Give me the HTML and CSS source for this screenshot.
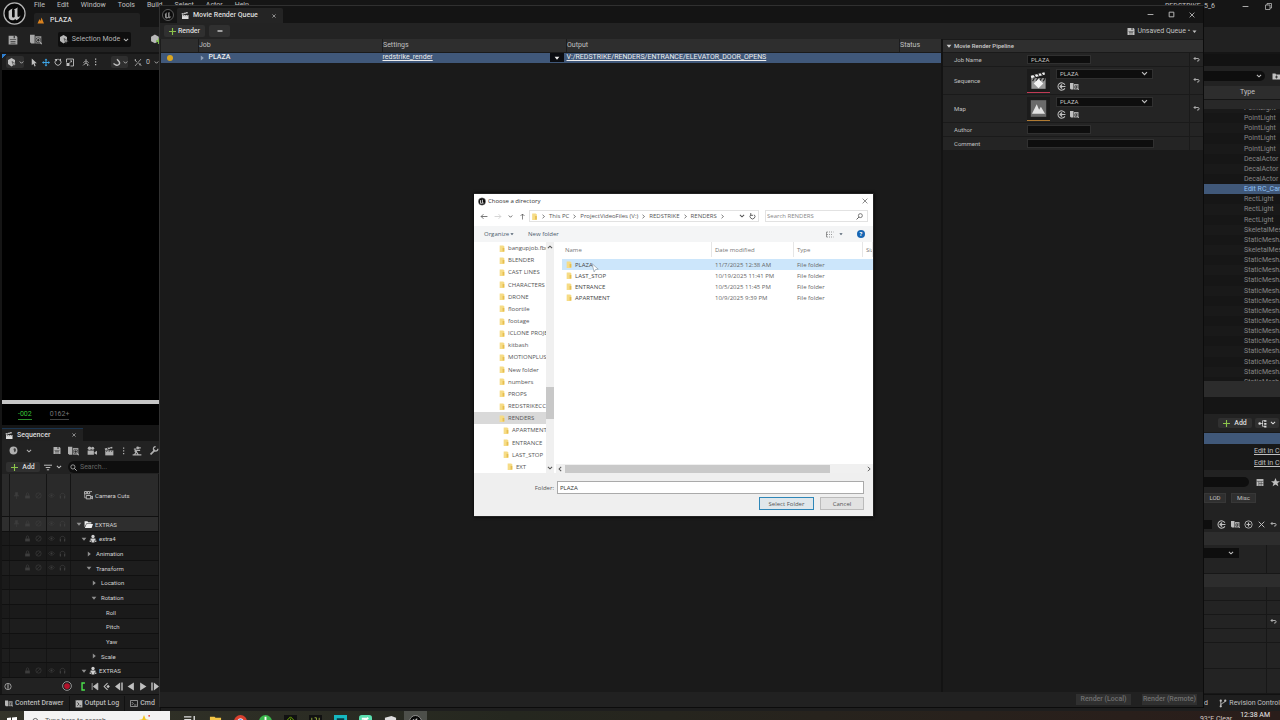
FILE: index.html
```
<!DOCTYPE html>
<html lang="en">
<head>
<meta charset="utf-8">
<title>Movie Render Queue</title>
<link rel="stylesheet" href="styles.css">
</head>
<body>
<svg class="defs" aria-hidden="true">
  <symbol id="ue" viewBox="0 0 24 24"><circle cx="12" cy="12" r="11" fill="#080808" stroke="#b5b5b5" stroke-width="1.3"/><path d="M5 12c.6-2.700 2.600-4.500 5.300-5.200-.8.700-.9 1.200-.9 2.200v5.800c0 .9.600 1.500 1.400 1.500s1.400-.6 1.400-1.200V8.600c0-.7-.3-1-.9-1.200 1.600-.3 2.900-.9 4.200-2-.5 1-.4 1.500-.4 2.400v6.800c0 .7.400 1 .9 1 1 0 1.700-.7 2.500-1.700-.9 3-2.800 4.300-4.500 5.100l-1.300-1.300c-.6.700-1.500 1.400-3 1.400-2.300 0-3.800-1.200-3.800-3.600v-4.800c0-.8-.2-.9-.9 1.300z" fill="#c4c4c4"/></symbol>
  <symbol id="save" viewBox="0 0 16 16"><path d="M1 1h12l2 2v12H1z" fill="currentColor"/><path d="M9 1h2v4H9zM4 10h8v1H4zM4 12.500h8v1H4z" fill="#333"/><path d="M3 7h10v1H3z" fill="#333"/></symbol>
  <symbol id="browse" viewBox="0 0 18 16"><path d="M0 1h7v13H2L0 12z" fill="currentColor"/><path d="M8 3h9v11H8z" fill="currentColor" opacity=".85"/><circle cx="12.500" cy="9" r="3" fill="#2a2a2a" stroke="#2a2a2a" stroke-width="2"/><circle cx="12.500" cy="9" r="2.600" fill="none" stroke="currentColor" stroke-width="1.400"/><path d="m14.500 11 3 4" stroke="currentColor" stroke-width="1.800"/></symbol>
  <symbol id="cube" viewBox="0 0 18 18"><path d="M7 0l7 4v8l-7 5-7-5V4z" fill="currentColor"/><path d="m8 7 9 5.500-3.500.8L12 17.500z" fill="currentColor" stroke="#161616"/></symbol>
  <symbol id="cubeadd" viewBox="0 0 20 20"><path d="M8 1l7 4v8l-7 4-7-4V5z" fill="#b9b9b9"/><path d="M15 8v10M10 13h10" stroke="#7ebd4e" stroke-width="3"/></symbol>
  <symbol id="chev" viewBox="0 0 10 10"><path d="m1.500 3 3.500 3.500L8.500 3" fill="none" stroke="currentColor" stroke-width="1.700"/></symbol>
  <symbol id="right" viewBox="0 0 10 10"><path d="m3 1.500 4 3.500-4 3.500" fill="none" stroke="currentColor" stroke-width="1.500"/></symbol>
  <symbol id="down" viewBox="0 0 10 10"><path d="M1 3h8L5 8z" fill="currentColor"/></symbol>
  <symbol id="tri" viewBox="0 0 10 10"><path d="M3 1v8l5-4z" fill="currentColor"/></symbol>
  <symbol id="plus" viewBox="0 0 12 12"><path d="M6 0v12M0 6h12" stroke="#8bc34a" stroke-width="1.900"/></symbol>
  <symbol id="x" viewBox="0 0 10 10"><path d="m1 1 8 8M9 1 1 9" stroke="currentColor" stroke-width="1.400"/></symbol>
  <symbol id="arrow" viewBox="0 0 12 16"><path d="M2 1v12l3-3 2 5 2-1-2-4.500h4z" fill="currentColor"/></symbol>
  <symbol id="move" viewBox="0 0 16 16"><path d="M8 0l3 3.500H9V7h3.500V5L16 8l-3.500 3V9H9v3.500h2L8 16l-3-3.500h2V9H3.500v2L0 8l3.500-3v2H7V3.500H5z" fill="#3ea6e8"/></symbol>
  <symbol id="rot" viewBox="0 0 16 16"><path d="M12 3a6 6 0 1 1-8 0" fill="none" stroke="currentColor" stroke-width="1.800"/><path d="M4 2.500C6 1.500 9 1.300 11 2.200" fill="none" stroke="currentColor" stroke-width="1.500"/><path d="M1 1h5v5zM14 0v5l-4-2z" fill="currentColor"/></symbol>
  <symbol id="scale" viewBox="0 0 16 16"><path d="M1 8V1h14v14H9" fill="none" stroke="currentColor" stroke-width="1.800"/><path d="M1 9h6v6H1zM8 4h4v4z" fill="currentColor"/><path d="m7 9 4-4" stroke="currentColor" stroke-width="1.500"/></symbol>
  <symbol id="axis" viewBox="0 0 16 16"><path d="M8 1v7l-6 6M8 8l6 6M3 9c1-5 9-5 10 0M5 12c2-3 4-3 6 0v3" fill="none" stroke="currentColor" stroke-width="1.400"/></symbol>
  <symbol id="dots" viewBox="0 0 6 16"><path d="M2 1h2.500v2.500H2zM2 6.500h2.500V9H2zM2 12h2.500v2.500H2z" fill="currentColor"/></symbol>
  <symbol id="snap" viewBox="0 0 16 16"><path d="m1 10 5 3c5 2 9-3 6-7L8 1.500" fill="none" stroke="currentColor" stroke-width="2.800"/></symbol>
  <symbol id="grid" viewBox="0 0 16 16"><path d="M2 15 14 1M1 3l5 4M9 10l6 4M3 1v4M12 9v5" fill="none" stroke="currentColor" stroke-width="1.400"/></symbol>
  <symbol id="mount" viewBox="0 0 16 16"><path d="M1 14l4-9 2 4 2-7 5 12z" fill="#d8811f"/></symbol>
  <symbol id="clap" viewBox="0 0 16 16"><path d="M2 7h13v8H2z" fill="currentColor"/><path d="m1 4 12-3 .7 2.500L2 6.700z" fill="currentColor"/><path d="m5 3 1.500 2.500M9 2l1.500 2.500M5 7 4 9.500M9 7 8 9.500M13 7l-1 2.500" stroke="#222" stroke-width="1.100"/></symbol>
  <symbol id="world" viewBox="0 0 16 16"><circle cx="8" cy="8" r="7" fill="currentColor"/><path d="M9 4c3-1 4 2 3 5s-3 2-3 0-2-3 0-5z" fill="#444"/></symbol>
  <symbol id="cam" viewBox="0 0 16 16"><circle cx="4" cy="3.500" r="2.800" fill="currentColor"/><circle cx="9" cy="3.500" r="2.500" fill="currentColor"/><path d="M1 7h10v7H1zM12 10l4-2.500V14l-4-2z" fill="currentColor"/></symbol>
  <symbol id="keys" viewBox="0 0 16 16"><path d="M1 14h14M4 14l3-5 3 5M3 5h4M9 3h5M8 7h5" fill="none" stroke="currentColor" stroke-width="2"/><circle cx="9" cy="3" r="2.200" fill="currentColor"/><circle cx="6" cy="8" r="2.200" fill="currentColor"/></symbol>
  <symbol id="wrench" viewBox="0 0 16 16"><path d="m1 15 8-8" stroke="currentColor" stroke-width="3"/><path d="M14 5a4 4 0 1 1-4-4" fill="none" stroke="currentColor" stroke-width="2.200"/></symbol>
  <symbol id="filter" viewBox="0 0 14 12"><path d="M0 2h14M3 6h8M5 10h4" stroke="currentColor" stroke-width="1.700"/></symbol>
  <symbol id="mag" viewBox="0 0 12 12"><circle cx="5" cy="5" r="3.600" fill="none" stroke="currentColor" stroke-width="1.300"/><path d="m7.500 7.500 4 4" stroke="currentColor" stroke-width="1.600"/></symbol>
  <symbol id="magl" viewBox="0 0 12 12"><circle cx="7.500" cy="4.500" r="3.400" fill="none" stroke="currentColor" stroke-width="1.300"/><path d="m5 7-4 4" stroke="currentColor" stroke-width="1.600"/></symbol>
  <symbol id="pin" viewBox="0 0 12 12"><path d="M4 1h4v4l2 2H2l2-2zM6 7v5" fill="currentColor" stroke="currentColor"/></symbol>
  <symbol id="lock" viewBox="0 0 12 12"><path d="M2 6h8v5H2z" fill="currentColor"/><path d="M4 6V3c0-2 4-2 4 0v3" fill="none" stroke="currentColor" stroke-width="1.300"/></symbol>
  <symbol id="mute" viewBox="0 0 12 12"><circle cx="6" cy="6" r="4.500" fill="none" stroke="currentColor" stroke-width="1.200"/><path d="m3 9 6-6" stroke="currentColor"/></symbol>
  <symbol id="eye" viewBox="0 0 12 12"><path d="M1 6c2.500-4 7.500-4 10 0-2.500 4-7.500 4-10 0z" fill="none" stroke="currentColor"/><circle cx="6" cy="6" r="1.800" fill="currentColor"/></symbol>
  <symbol id="head" viewBox="0 0 12 12"><path d="M2 10V6c0-5 8-5 8 0v4" fill="none" stroke="currentColor" stroke-width="1.200"/><path d="M1.500 7h2v4h-2zM8.500 7h2v4h-2z" fill="currentColor"/></symbol>
  <symbol id="cuts" viewBox="0 0 16 16"><path d="M1 1h4v4H1zM6 1h4v4H6zM11 1h3M4 8h8v6H4zM12 11l3-2v5l-3-2" fill="none" stroke="currentColor" stroke-width="1.500"/><path d="M1 5v7h3" fill="none" stroke="currentColor"/></symbol>
  <symbol id="folder" viewBox="0 0 16 14"><path d="M1 1h5l1.500 2H13v2H4l-3 7z" fill="#eee"/><path d="M4.500 6H16l-2.500 7H1.500z" fill="#eee"/></symbol>
  <symbol id="person" viewBox="0 0 16 16"><circle cx="8" cy="4" r="3.300" fill="currentColor"/><path d="M3 8h10v5h-2v3H5v-3H3z" fill="currentColor"/><path d="M1 12h4v3H1zM11 12h4v3h-4z" fill="currentColor" stroke="#222" stroke-width=".7"/></symbol>
  <symbol id="info" viewBox="0 0 14 14"><circle cx="7" cy="7" r="5.500" fill="none" stroke="currentColor" stroke-width="1.300"/><path d="M7 3v8" stroke="currentColor" stroke-width="1.600"/></symbol>
  <symbol id="rec" viewBox="0 0 16 16"><circle cx="8" cy="8" r="7" fill="#1b1b1b" stroke="#bbb" stroke-width="1.200"/><circle cx="8" cy="8" r="4.600" fill="#b3122a"/></symbol>
  <symbol id="brk" viewBox="0 0 8 14"><path d="M7 1.500H2.500v11H7" fill="none" stroke="#4be04b" stroke-width="2.200"/></symbol>
  <symbol id="first" viewBox="0 0 14 14"><path d="M2 1v12M12 1v12L4 7z" fill="currentColor" stroke="currentColor" stroke-width="1.300"/></symbol>
  <symbol id="pkey" viewBox="0 0 14 14"><path d="M8 1 2 7l6 6" fill="none" stroke="currentColor" stroke-width="1.800"/><path d="m9 4 3 3-3 3-3-3z" fill="currentColor"/></symbol>
  <symbol id="pframe" viewBox="0 0 14 14"><path d="M9 0v14L0 7zM11 0h2.500v14H11z" fill="currentColor"/></symbol>
  <symbol id="play" viewBox="0 0 14 14"><path d="M2 0v14l11-7z" fill="currentColor"/></symbol>
  <symbol id="log" viewBox="0 0 14 16"><path d="M1 2h12v13H1z" fill="currentColor"/><path d="M3 0v3M7 0v3M11 0v3" stroke="#222"/><path d="m4 6 3 3-3 3M8 12h3" fill="none" stroke="#222" stroke-width="1.400"/></symbol>
  <symbol id="term" viewBox="0 0 16 14"><path d="M1 1h14v12H1z" fill="none" stroke="currentColor" stroke-width="1.400"/><path d="m3.500 4 3 3-3 3M8 10h5" fill="none" stroke="currentColor" stroke-width="1.400"/></symbol>
  <symbol id="branch" viewBox="0 0 14 16"><circle cx="3" cy="3" r="2" fill="currentColor"/><circle cx="11" cy="3" r="2" fill="currentColor"/><circle cx="3" cy="13" r="2" fill="currentColor"/><path d="M3 3v10M11 3c0 5-8 3-8 8" fill="none" stroke="currentColor" stroke-width="1.500"/></symbol>
  <symbol id="revert" viewBox="0 0 14 12"><path d="M5 1 2 4l3 3M2 4h8c3 0 3 5 0 5H8" fill="none" stroke="currentColor" stroke-width="1.700"/></symbol>
  <symbol id="use" viewBox="0 0 16 16"><path d="M14 5a6.500 6.500 0 1 0 0 6" fill="none" stroke="currentColor" stroke-width="1.800"/><path d="M15 8H6M9 4.500 5.500 8 9 11.500" fill="none" stroke="currentColor" stroke-width="2.200"/></symbol>
  <symbol id="target" viewBox="0 0 16 16"><circle cx="8" cy="8" r="6.500" fill="none" stroke="currentColor" stroke-width="1.500"/><path d="M8 4.500v7M4.500 8h7" stroke="currentColor" stroke-width="2"/></symbol>
  <symbol id="faddr" viewBox="0 0 16 14"><path d="M1 1h6l1 2h8v10H1z" fill="currentColor"/><path d="M9 5v6M6 8h6" stroke="#222" stroke-width="1.500"/></symbol>
  <symbol id="nodes" viewBox="0 0 16 14"><circle cx="3" cy="7" r="2.300" fill="currentColor"/><path d="M5 7h4M8 2h5M8 12h5M8 2v10" stroke="currentColor" stroke-width="1.300"/><path d="M11 1h4v3h-4zM11 6h4v3h-4zM11 11h4v3h-4z" fill="currentColor"/></symbol>
  <symbol id="cells" viewBox="0 0 14 14"><path d="M1 1h12v12H1z" fill="currentColor"/><path d="M1 5h12M5 5v8M9 5v8M5 9h8" stroke="#333"/></symbol>
  <symbol id="star" viewBox="0 0 14 14"><path d="m7 0 2 5h5l-4 3 1.500 5L7 10l-4.500 3L4 8 0 5h5z" fill="currentColor"/></symbol>
  <symbol id="restore" viewBox="0 0 14 14"><path d="M1 4h9v9H1zM4 4V1h9v9h-3" fill="none" stroke="currentColor" stroke-width="1.500"/></symbol>
  <symbol id="max" viewBox="0 0 12 12"><path d="M2 2h8v8H2z" fill="none" stroke="currentColor" stroke-width="1.600"/></symbol>
  <symbol id="min" viewBox="0 0 12 12"><path d="M1 6h10" stroke="currentColor" stroke-width="1.500"/></symbol>
  <symbol id="bar" viewBox="0 0 12 12"><path d="M1 6h10" stroke="currentColor" stroke-width="2.600"/></symbol>
  <symbol id="seq" viewBox="0 0 32 32"><path d="M4 12h24v18H4z" fill="#999"/><path d="m3 8 23-6 1 4L4 12z" fill="#eee"/><path d="m8 6 3 4M14 4l3 4M20 3l3 4M9 12l-3 5M15 12l-3 5M21 12l-3 5M27 12l-3 5" stroke="#252525" stroke-width="2"/><path d="m16 13 8 8-8 8-8-8z" fill="#f2f2f2"/></symbol>
  <symbol id="map" viewBox="0 0 32 32"><path d="M3 2h26v28H3z" fill="#6a6a6a"/><path d="m5 25 8-16 4 9 3-5 7 12z" fill="#e2e2e2"/></symbol>
  <symbol id="yf" viewBox="0 0 10 12"><path d="M1 1h6l2 1v10H1z" fill="#f6dc86"/><path d="M6 5h3v6H6z" fill="#e6bf50"/></symbol>
  <symbol id="back" viewBox="0 0 14 10"><path d="M13 5H2M6 1 2 5l4 4" fill="none" stroke="currentColor" stroke-width="1.400"/></symbol>
  <symbol id="refresh" viewBox="0 0 12 12"><path d="M9 3a4.200 4.200 0 1 1-6 0M3 0v4h4" fill="none" stroke="currentColor" stroke-width="1.500"/></symbol>
  <symbol id="view" viewBox="0 0 16 12"><path d="M1 1h3M1 6h3M1 11h3M6 1h2M10 1h2M14 1h1M6 6h2M10 6h2M6 11h2M10 11h2M14 11h1M1 1v10" fill="none" stroke="#666" stroke-width="1.300"/></symbol>
</svg>

<div class="desktop">
  <main class="editor">
    <header class="apphead">
      <svg class="uelogo"><use href="#ue"/></svg>
      <div class="headcol">
        <nav class="menu"><a href="#">File</a><a href="#">Edit</a><a href="#">Window</a><a href="#">Tools</a><a href="#">Build</a><a href="#">Select</a><a href="#">Actor</a><a href="#">Help</a></nav>
        <div class="leveltab"><svg class="i8"><use href="#mount"/></svg>PLAZA</div>
      </div>
      <div class="wintitle"><span>REDSTRIKE_5_6</span><svg class="i7 m1"><use href="#min"/></svg><svg class="i7"><use href="#restore"/></svg></div>
    </header>
    <div class="toolbar">
      <svg class="i10"><use href="#save"/></svg><svg class="i12"><use href="#browse"/></svg>
      <button class="mode"><svg class="i9"><use href="#cube"/></svg>Selection Mode<svg class="i6"><use href="#chev"/></svg></button>
      <svg class="i12"><use href="#cubeadd"/></svg>
    </div>
    <div class="work">
      <section class="left">
        <div class="viewbar">
          <span class="pill"><svg class="i9"><use href="#cube"/></svg><svg class="i5"><use href="#chev"/></svg></span>
          <svg class="i8"><use href="#arrow"/></svg><svg class="i8"><use href="#move"/></svg><svg class="i8"><use href="#rot"/></svg><svg class="i8"><use href="#scale"/></svg>
          <i class="vline"></i><svg class="i8"><use href="#axis"/></svg><svg class="dot"><use href="#dots"/></svg>
          <span class="pill snap"><svg class="i8"><use href="#snap"/></svg><svg class="i5"><use href="#chev"/></svg></span>
          <svg class="i8"><use href="#grid"/></svg><span class="zero">0</span><svg class="i5"><use href="#chev"/></svg>
        </div>
        <div class="viewport"></div>
        <div class="frames"><span class="cur">-002</span><span class="len">0162+</span></div>
        <div class="seqtabs"><div class="seqtab"><svg class="i8"><use href="#clap"/></svg>Sequencer<svg class="i4"><use href="#x"/></svg></div></div>
        <div class="seqbar">
          <svg class="i9"><use href="#world"/></svg><svg class="i6"><use href="#chev"/></svg><i class="gap"></i>
          <svg class="i8"><use href="#save"/></svg><svg class="i11"><use href="#browse"/></svg><svg class="i10"><use href="#cam"/></svg><svg class="i10"><use href="#clap"/></svg><svg class="dot"><use href="#dots"/></svg><svg class="i10"><use href="#keys"/></svg><svg class="i9"><use href="#wrench"/></svg>
        </div>
        <div class="addbar"><button class="add"><svg class="i7"><use href="#plus"/></svg>Add</button><svg class="i8"><use href="#filter"/></svg><svg class="i6"><use href="#chev"/></svg><label class="seqsearch"><svg class="i7"><use href="#mag"/></svg><input type="text" placeholder="Search..." aria-label="Search tracks"></label></div>
        <ul class="tree">
          <li class="track cuts"><span></span><span class="flags"><svg><use href="#pin"/></svg><svg><use href="#lock"/></svg><svg><use href="#mute"/></svg></span><span class="flags"><svg><use href="#eye"/></svg><svg><use href="#head"/></svg></span><span class="name d0"><svg class="i9"><use href="#cuts"/></svg>Camera Cuts</span></li>
          <li class="track lit"><span></span><span class="flags"><svg><use href="#pin"/></svg><svg><use href="#lock"/></svg><svg><use href="#mute"/></svg></span><span class="flags"><svg><use href="#eye"/></svg><svg><use href="#head"/></svg></span><span class="name d1"><svg class="i6"><use href="#down"/></svg><svg class="i9"><use href="#folder"/></svg>EXTRAS</span></li>
          <li class="track"><span></span><span class="flags"><svg><use href="#lock"/></svg><svg><use href="#mute"/></svg></span><span class="flags"><svg><use href="#eye"/></svg><svg><use href="#head"/></svg></span><span class="name d2"><svg class="i6"><use href="#down"/></svg><svg class="i8"><use href="#person"/></svg>extra4</span></li>
          <li class="track"><span></span><span class="flags"><svg><use href="#lock"/></svg><svg><use href="#mute"/></svg></span><span class="flags"><svg><use href="#eye"/></svg><svg><use href="#head"/></svg></span><span class="name d3"><svg class="i6"><use href="#tri"/></svg>Animation</span></li>
          <li class="track alt"><span></span><span class="flags"><svg><use href="#lock"/></svg><svg><use href="#mute"/></svg></span><span class="flags"><svg><use href="#eye"/></svg><svg><use href="#head"/></svg></span><span class="name d3"><svg class="i6"><use href="#down"/></svg>Transform</span></li>
          <li class="track"><span></span><span class="flags"></span><span class="flags"></span><span class="name d4"><svg class="i6"><use href="#tri"/></svg>Location</span></li>
          <li class="track alt"><span></span><span class="flags"></span><span class="flags"></span><span class="name d4"><svg class="i6"><use href="#down"/></svg>Rotation</span></li>
          <li class="track"><span></span><span class="flags"></span><span class="flags"></span><span class="name d5">Roll</span></li>
          <li class="track alt"><span></span><span class="flags"></span><span class="flags"></span><span class="name d5">Pitch</span></li>
          <li class="track"><span></span><span class="flags"></span><span class="flags"></span><span class="name d5">Yaw</span></li>
          <li class="track alt"><span></span><span class="flags"></span><span class="flags"></span><span class="name d4"><svg class="i6"><use href="#tri"/></svg>Scale</span></li>
          <li class="track"><span></span><span class="flags"><svg><use href="#lock"/></svg><svg><use href="#mute"/></svg></span><span class="flags"><svg><use href="#eye"/></svg><svg><use href="#head"/></svg></span><span class="name d2"><svg class="i6"><use href="#down"/></svg><svg class="i8"><use href="#person"/></svg>EXTRAS</span></li>
        </ul>
        <div class="playbar"><svg class="i8"><use href="#info"/></svg><svg class="i10 rec"><use href="#rec"/></svg><svg class="i8"><use href="#brk"/></svg><svg class="i8"><use href="#first"/></svg><svg class="i8"><use href="#pkey"/></svg><svg class="i8"><use href="#pframe"/></svg><svg class="i8 flip"><use href="#play"/></svg><svg class="i8"><use href="#play"/></svg><svg class="i8 flip"><use href="#pframe"/></svg></div>
      </section>

      <aside class="right">
        <div class="outsearch"><span class="field"><svg class="i6"><use href="#chev"/></svg></span><svg class="i8"><use href="#faddr"/></svg></div>
        <div class="typehead">Type</div>
        <div class="band"></div>
        <div class="actors"><ul>
          <li>PointLight</li><li>PointLight</li><li>PointLight</li><li>PointLight</li><li>PointLight</li><li>DecalActor</li><li>DecalActor</li><li>DecalActor</li><li class="sel">Edit RC_Camera</li><li>RectLight</li><li>RectLight</li><li>RectLight</li><li>SkeletalMeshActor</li><li>StaticMeshActor</li><li>SkeletalMeshActor</li><li>StaticMeshActor</li><li>StaticMeshActor</li><li>StaticMeshActor</li><li>StaticMeshActor</li><li>StaticMeshActor</li><li>StaticMeshActor</li><li>StaticMeshActor</li><li>StaticMeshActor</li><li>StaticMeshActor</li><li>StaticMeshActor</li><li>StaticMeshActor</li><li>StaticMeshActor</li><li>StaticMeshActor</li>
        </ul></div>
        <div class="actfoot"></div>
        <div class="dettabs"></div>
        <div class="detadd"><button class="add"><svg class="i7"><use href="#plus"/></svg>Add</button><button class="add bp"><svg class="i9"><use href="#nodes"/></svg><svg class="i6"><use href="#chev"/></svg></button></div>
        <div class="comps"><div class="csel"></div><a href="#">Edit in C++</a><a href="#">Edit in C++</a></div>
        <div class="detsearch"><span class="field"></span><svg class="i8"><use href="#cells"/></svg><svg class="i9"><use href="#star"/></svg></div>
        <div class="chips"><button>LOD</button><button>Misc</button></div>
        <div class="deticons"><span class="stub"></span><svg class="i9"><use href="#use"/></svg><svg class="i9"><use href="#browse"/></svg><svg class="i9"><use href="#target"/></svg><svg class="i7"><use href="#x"/></svg><svg class="i7"><use href="#revert"/></svg></div>
        <div class="catband"></div>
        <div class="prop big"><span class="combo"><svg class="i6"><use href="#chev"/></svg></span><i></i></div>
        <div class="catband"></div>
        <div class="prop"><span></span><i></i></div>
        <div class="prop"><span></span><i></i></div>
        <div class="prop"><span></span><i><svg class="i7"><use href="#revert"/></svg></i></div>
        <div class="prop"><span></span><i></i></div>
        <div class="prop tall"><span></span><i></i></div>
        <div class="prop fill"><span></span><i></i></div>
      </aside>
    </div>
    <footer class="status"><button><svg class="i8"><use href="#browse"/></svg>Content Drawer</button><button><svg class="i8"><use href="#log"/></svg>Output Log</button><button><svg class="i8"><use href="#term"/></svg>Cmd</button><span class="rev"><b>d</b><svg class="i8"><use href="#branch"/></svg><span>Revision Control</span></span></footer>
  </main>

  <footer class="taskbar">
    <svg class="winlogo" viewBox="0 0 10 10"><path d="M0 1l4-.5V4.700H0zM5 .4 10 0v4.700H5zM0 5.500h4V10H0zM5 5.500h5V10H5z" fill="#fff"/></svg>
    <div class="find"><svg class="i8"><use href="#mag"/></svg><span>Type here to search</span><svg class="spark" viewBox="0 0 14 14"><path d="m7 0 2 5 5 1-4 3 1 5-4-3-4 3 1-5-4-3 5-1z" fill="#f2c31f"/><circle cx="13" cy="1" r="1" fill="#d33"/></svg></div>
    <svg class="task" viewBox="0 0 14 14"><path d="M0 2h8M1 5h6v8H1zM11 1v13" fill="none" stroke="#ddd" stroke-width="1.500"/></svg>
    <svg class="task" viewBox="0 0 14 14"><path d="M1 2h5l1 1h6v10H1z" fill="#f3c545"/></svg>
    <svg class="task" viewBox="0 0 14 14"><circle cx="7" cy="7" r="7" fill="#d9402f"/><circle cx="7" cy="7" r="3" fill="#4285f4" stroke="#fff"/></svg>
    <svg class="task" viewBox="0 0 14 14"><circle cx="7" cy="7" r="7" fill="#39b54a"/><path d="M7 2v5h3" stroke="#fff" stroke-width="2" fill="none"/></svg>
    <svg class="task" viewBox="0 0 14 14"><path d="M0 0h14v14H0z" fill="#111"/><path d="m2 7 5-5 5 5M7 4v6" stroke="#76b900" fill="none"/></svg>
    <svg class="task" viewBox="0 0 14 14"><path d="M0 0h14v14H0z" fill="#111"/><path d="M3 8V3M6 3h2v5M11 3v5" stroke="#9bb13c" fill="none"/></svg>
    <svg class="task" viewBox="0 0 14 14"><path d="M0 0h14v14H0z" fill="#16b8c0"/><path d="M3 5h8" stroke="#073a44" stroke-width="3"/></svg>
    <svg class="task" viewBox="0 0 14 14"><rect width="14" height="14" rx="3" fill="#5be0b0"/><path d="M3 4h6M5 7l5-4" stroke="#fff" stroke-width="2"/></svg>
    <svg class="task" viewBox="0 0 14 14"><path d="M1 3 8 1l5 2v10H1z" fill="#ddd"/></svg>
    <span class="active"><svg class="task" viewBox="0 0 24 24"><use href="#ue"/></svg></span>
    <div class="tray"><span class="weather">93°F Clear</span><time>12:38 AM</time></div>
  </footer>

  <section class="queue" aria-label="Movie Render Queue">
    <header class="qtitle"><svg class="qlogo"><use href="#ue"/></svg><div class="qtab"><svg class="i8"><use href="#clap"/></svg>Movie Render Queue<svg class="i4"><use href="#x"/></svg></div><div class="qwin"><svg class="i7"><use href="#min"/></svg><svg class="i7"><use href="#max"/></svg><svg class="i6"><use href="#x"/></svg></div></header>
    <div class="qbar"><button><svg class="i7"><use href="#plus"/></svg>Render</button><button class="minus" aria-label="Remove"><svg class="i6"><use href="#bar"/></svg></button><div class="unsaved"><svg class="i8"><use href="#save"/></svg>Unsaved Queue •<svg class="i5"><use href="#down"/></svg></div></div>
    <div class="qbody">
      <div class="jobs">
        <table>
          <colgroup><col class="c0"><col class="c1"><col class="c2"><col class="c3"><col class="c4"></colgroup>
          <thead><tr><th></th><th>Job</th><th>Settings</th><th>Output</th><th>Status</th></tr></thead>
          <tbody><tr><td><i class="light"></i></td><td><div class="job"><svg class="i6"><use href="#tri"/></svg>PLAZA</div></td><td><div class="set"><a href="#">redstrike_render</a><button aria-label="Presets"><svg class="i6"><use href="#down"/></svg></button></div></td><td><a href="#">V:/REDSTRIKE/RENDERS/ENTRANCE/ELEVATOR_DOOR_OPENS</a></td><td></td></tr></tbody>
        </table>
      </div>
      <div class="details">
        <h2><svg class="i6"><use href="#down"/></svg>Movie Render Pipeline</h2>
        <div class="drow"><label for="jn">Job Name</label><input id="jn" class="short" value="PLAZA"><i><svg class="i7"><use href="#revert"/></svg></i></div>
        <div class="drow asset"><label for="sq">Sequence</label><div class="pick"><svg class="thumb red"><use href="#seq"/></svg><div><span class="sel"><select id="sq"><option>PLAZA</option></select><svg class="i7"><use href="#chev"/></svg></span><span class="acts"><svg class="i9"><use href="#use"/></svg><svg class="i9"><use href="#browse"/></svg></span></div></div><i><svg class="i7"><use href="#revert"/></svg></i></div>
        <div class="drow asset"><label for="mp">Map</label><div class="pick"><svg class="thumb org"><use href="#map"/></svg><div><span class="sel"><select id="mp"><option>PLAZA</option></select><svg class="i7"><use href="#chev"/></svg></span><span class="acts"><svg class="i9"><use href="#use"/></svg><svg class="i9"><use href="#browse"/></svg></span></div></div><i><svg class="i7"><use href="#revert"/></svg></i></div>
        <div class="drow"><label for="au">Author</label><input id="au" class="short"><i></i></div>
        <div class="drow"><label for="cm">Comment</label><input id="cm"><i></i></div>
      </div>
    </div>
    <footer class="qfoot"><button disabled>Render (Local)</button><button disabled>Render (Remote)</button></footer>
  </section>

  <section class="dialog" role="dialog" aria-label="Choose a directory">
    <header class="dtitle"><svg class="i8"><use href="#ue"/></svg>Choose a directory<svg class="i6"><use href="#x"/></svg></header>
    <div class="addr">
      <svg class="i8"><use href="#back"/></svg><svg class="i8 flip dim"><use href="#back"/></svg><svg class="i5"><use href="#chev"/></svg><svg class="i7 up"><use href="#back"/></svg>
      <div class="crumbs"><svg class="i7"><use href="#yf"/></svg><svg class="i5"><use href="#right"/></svg><span>This PC</span><svg class="i5"><use href="#right"/></svg><span>ProjectVideoFiles (V:)</span><svg class="i5"><use href="#right"/></svg><span>REDSTRIKE</span><svg class="i5"><use href="#right"/></svg><span>RENDERS</span><svg class="i5"><use href="#right"/></svg><svg class="i6 end"><use href="#chev"/></svg><svg class="i7"><use href="#refresh"/></svg></div>
      <label class="dsearch"><input type="text" placeholder="Search RENDERS" aria-label="Search RENDERS"><svg class="i7"><use href="#magl"/></svg></label>
    </div>
    <div class="dbar"><button>Organize<svg class="i4"><use href="#down"/></svg></button><button>New folder</button><svg class="i8 vw"><use href="#view"/></svg><svg class="i4"><use href="#down"/></svg><span class="help">?</span></div>
    <div class="dmain">
      <ul class="nav">
        <li><svg><use href="#yf"/></svg>bangupjob.fbm</li><li><svg><use href="#yf"/></svg>BLENDER</li><li><svg><use href="#yf"/></svg>CAST LINES</li><li><svg><use href="#yf"/></svg>CHARACTERS</li><li><svg><use href="#yf"/></svg>DRONE</li><li><svg><use href="#yf"/></svg>floortile</li><li><svg><use href="#yf"/></svg>footage</li><li><svg><use href="#yf"/></svg>ICLONE PROJECTS</li><li><svg><use href="#yf"/></svg>kitbash</li><li><svg><use href="#yf"/></svg>MOTIONPLUS</li><li><svg><use href="#yf"/></svg>New folder</li><li><svg><use href="#yf"/></svg>numbers</li><li><svg><use href="#yf"/></svg>PROPS</li><li><svg><use href="#yf"/></svg>REDSTRIKECC</li><li class="on"><svg><use href="#yf"/></svg>RENDERS</li><li class="n1"><svg><use href="#yf"/></svg>APARTMENT</li><li class="n1"><svg><use href="#yf"/></svg>ENTRANCE</li><li class="n1"><svg><use href="#yf"/></svg>LAST_STOP</li><li class="n2"><svg><use href="#yf"/></svg>EXT</li>
      </ul>
      <div class="vs"><svg class="i6 flipv"><use href="#chev"/></svg><i></i><svg class="i6 foot"><use href="#chev"/></svg></div>
      <div class="files">
        <table>
          <colgroup><col class="f1"><col class="f2"><col class="f3"><col></colgroup>
          <thead><tr><th>Name</th><th>Date modified</th><th>Type</th><th>Size</th></tr></thead>
          <tbody>
            <tr class="on"><td><svg><use href="#yf"/></svg>PLAZA</td><td>11/7/2025 12:38 AM</td><td>File folder</td><td></td></tr>
            <tr><td><svg><use href="#yf"/></svg>LAST_STOP</td><td>10/19/2025 11:41 PM</td><td>File folder</td><td></td></tr>
            <tr><td><svg><use href="#yf"/></svg>ENTRANCE</td><td>10/5/2025 11:45 PM</td><td>File folder</td><td></td></tr>
            <tr><td><svg><use href="#yf"/></svg>APARTMENT</td><td>10/9/2025 9:39 PM</td><td>File folder</td><td></td></tr>
          </tbody>
        </table>
        <div class="hs"><svg class="i6 cw"><use href="#chev"/></svg><i></i><svg class="i6"><use href="#right"/></svg></div>
      </div>
    </div>
    <div class="dfoot">
      <div class="frow"><label for="fo">Folder:</label><input id="fo" value="PLAZA"></div>
      <div class="btns"><button class="ok">Select Folder</button><button>Cancel</button></div>
    </div>
    <svg class="cursor" viewBox="0 0 12 16"><path d="m1 1 9 8-4 .5L4 13z" fill="#fff" stroke="#8a9aa8"/></svg>
  </section>
</div>
</body>
</html>
```

FILE: styles.css
```
* { box-sizing: border-box; }
body { margin: 0; background: #111; font: 7px/9px Roboto, sans-serif; color: #c0c0c0; }
ul { margin: 0; padding: 0; list-style: none; }
a { color: inherit; text-decoration: none; }
button, input, select { font: inherit; color: inherit; border: 0; margin: 0; padding: 0; background: none; border-radius: 0; min-width: 0; appearance: none; }
button { display: flex; align-items: center; justify-content: center; white-space: nowrap; }
svg { flex: none; display: block; }
.defs { display: none; }
.i4 { width: 4px; height: 4px; } .i5 { width: 5px; height: 5px; } .i6 { width: 6px; height: 6px; }
.i7 { width: 7px; height: 7px; } .i8 { width: 8px; height: 9px; } .i9 { width: 9px; height: 9px; }
.i10 { width: 10px; height: 10px; } .i11 { width: 11px; height: 10px; } .i12 { width: 12px; height: 11px; }
.dot { width: 3px; height: 8px; }
.flip { transform: scaleX(-1); } .flipv { transform: scaleY(-1); } .up, .cw { transform: rotate(90deg); }

.desktop { position: relative; height: 100vh; overflow: hidden; display: flex; flex-direction: column; }
.editor { flex: 1; min-height: 0; display: flex; flex-direction: column; background: #151515; }
.apphead { display: flex; height: 27px; flex: none; }
.uelogo { width: 23px; height: 23px; margin: 2px 0 0 3px; }
.headcol { padding-left: 8px; display: flex; flex-direction: column; justify-content: space-between; }
.menu { display: flex; gap: 12px; padding-top: 1px; }
.leveltab { display: flex; align-items: center; gap: 5px; width: 106px; height: 14px; padding-left: 3px; background: #212121; border-radius: 2px 2px 0 0; font-weight: 500; color: #ddd; }
.wintitle { margin-left: auto; display: flex; align-items: center; height: 12px; padding-right: 8px; }
.wintitle .m1 { margin: 0 16px 0 27px; }
.toolbar { display: flex; align-items: center; height: 25px; flex: none; background: #212121; padding-left: 8px; color: #a8a8a8; }
.toolbar > .i12 { margin-left: 12px; }
.mode { gap: 3px; height: 15px; width: 73px; margin: 0 8px 0 16px; background: #0e0e0e; color: #b5b5b5; border-radius: 2px; }
.toolbar .mode + .i12 { margin-left: 11px; }
.work { flex: 1; min-height: 0; display: flex; justify-content: space-between; padding-top: 2px; }

.left { width: 157px; margin-left: 2px; display: flex; flex-direction: column; min-height: 0; }
.viewbar { display: flex; align-items: center; gap: 4px; height: 16px; flex: none; padding-left: 4px; background: linear-gradient(135deg, #2f7fd0 3px, #202020 3px); }
.pill { display: flex; align-items: center; gap: 2px; width: 20px; height: 12px; padding-left: 2px; background: #2f2f2f; border-radius: 2px; margin-right: 2px; }
.pill.snap { margin-left: 10px; }
.vline { width: 1px; height: 11px; background: #555; }
.viewport { flex: 1; background: #000; border-bottom: 4px solid #c6c6c6; }
.frames { height: 21px; flex: none; background: #000; display: flex; align-items: center; gap: 18px; padding-left: 16px; }
.cur { color: #38c438; border-bottom: 1px solid #2b8f2b; }
.len { color: #777; border-bottom: 1px solid #444; }
.seqtabs { height: 16px; flex: none; padding-top: 3px; }
.seqtab { width: 81px; height: 13px; display: flex; align-items: center; gap: 4px; padding: 0 7px 0 3px; background: #212121; border-top: 1px solid #1b3550; color: #ddd; font-weight: 500; }
.seqtab .i4 { margin-left: auto; }
.seqbar { height: 19px; flex: none; display: flex; align-items: center; justify-content: space-between; background: #222; padding-left: 7px; color: #b0b0b0; }
.seqbar .gap { width: 6px; }
.addbar { height: 14px; flex: none; display: flex; align-items: center; gap: 4px; background: #222; padding-left: 4px; }
.add { gap: 4px; height: 10px; width: 34px; background: #303030; color: #ddd; font-weight: 500; border-radius: 2px; }
.seqsearch { flex: 1; display: flex; align-items: center; gap: 3px; height: 12px; padding-left: 2px; margin-left: 2px; background: #0e0e0e; border-radius: 6px 0 0 6px; }
.seqsearch input { width: 100%; }
::placeholder { color: #666; opacity: 1; }
.tree { height: 204px; flex: none; display: flex; flex-direction: column; overflow: hidden; font-size: 6px; }
.track { flex: 1; min-height: 0; display: grid; grid-template-columns: 8px 37px 24px 1fr; border-bottom: 1px solid #101010; background: #1a1a1a; }
.track.cuts { flex: none; height: 43px; background: #2a2a2a; }
.track.lit { background: #2e2e2e; }
.track.alt { background: #1d1d1d; }
.track > span { border-right: 1px solid #141414; }
.flags { display: flex; align-items: center; justify-content: flex-end; gap: 4px; padding-right: 4px; color: #3d3d3d; }
.flags svg { width: 7px; height: 7px; }
.name { display: flex; align-items: center; gap: 2px; white-space: nowrap; color: #d2d2d2; padding-top: 1px; }
.name svg { color: #8f8f8f; } .name .i8, .name .i9 { color: #d0d0d0; }
.d0 { padding-left: 13px; } .d1 { padding-left: 5px; } .d2 { padding-left: 10px; } .d3, .d4 { gap: 4px; } .d3 { padding-left: 15px; } .d4 { padding-left: 20px; } .d5 { padding-left: 35px; }
.playbar { height: 16px; flex: none; display: flex; align-items: center; justify-content: space-between; background: #222; padding-left: 2px; }
.playbar .rec { margin: 0 3px 0 46px; }
.status { height: 17px; flex: none; display: flex; align-items: center; background: #1e1e1e; border-top: 1px solid #111; }
.status button { gap: 2px; height: 15px; padding: 0 5px; border-right: 1px solid #111; font-weight: 500; color: #b8b8b8; }
.rev { margin-left: auto; width: 76px; display: flex; align-items: center; gap: 2px; white-space: nowrap; overflow: hidden; }
.rev b { font-weight: 400; width: 15px; }

.right { width: 76px; display: flex; flex-direction: column; background: #222; overflow: hidden; }
.outsearch { margin-top: -2px; padding-top: 14px; height: 34px; flex: none; display: flex; align-items: center; gap: 7px; background: linear-gradient(#121212 14px, #222 14px); }
.field { height: 10px; width: 62px; display: flex; align-items: center; justify-content: flex-end; padding-right: 3px; background: #0e0e0e; border-radius: 0 5px 5px 0; }
.typehead { height: 14px; flex: none; padding: 2px 0 0 36px; background: #2d2d2d; border-bottom: 1px solid #151515; }
.band { height: 9px; flex: none; background: #282828; }
.actors { height: 272px; flex: none; overflow: hidden; background: #161616; color: #858585; }
.actors ul { height: 284px; margin-top: -6px; display: flex; flex-direction: column; }
.actors li { flex: 1; min-height: 0; padding-left: 40px; white-space: nowrap; line-height: 10px; }
.actors li:nth-child(odd) { background: #191919; }
.actors li.sel { background: #405879; color: #8fc0f5; display: block; }
.actfoot { height: 16px; flex: none; background: #2c2c2c; }
.dettabs { height: 17px; flex: none; background: #151515; }
.detadd { height: 18px; flex: none; display: flex; align-items: center; gap: 3px; padding-left: 14px; }
.detadd .bp { width: 24px; gap: 3px; }
.comps { height: 38px; flex: none; background: #181818; padding-top: 1px; display: flex; flex-direction: column; gap: 3px; }
.comps a { padding-left: 50px; white-space: nowrap; text-decoration: underline; }
.csel { height: 11px; background: #405879; }
.detsearch { height: 20px; flex: none; display: flex; align-items: center; gap: 7px; padding-top: 4px; }
.detsearch .field { width: 50px; }
.chips { height: 15px; flex: none; display: flex; align-items: center; gap: 5px; font-size: 6px; }
.chips button { height: 10px; width: 25px; background: #2f2f2f; border: 1px solid #373737; }
.chips button:first-child { width: 22px; }
.deticons { height: 27px; padding-top: 12px; flex: none; display: flex; align-items: center; justify-content: space-between; padding-right: 3px; }
.stub { width: 8px; height: 9px; background: #0e0e0e; }
.catband { height: 13px; flex: none; background: #2d2d2d; }
.prop { height: 14px; flex: none; display: flex; justify-content: space-between; border-bottom: 1px solid #171717; background: #232323; }
.prop i { width: 14px; border-left: 1px solid #171717; display: flex; align-items: center; padding-left: 3px; }
.prop.big { height: 29px; } .prop.tall { height: 26px; } .prop.fill { flex: 1; }
.combo { width: 35px; height: 10px; margin-top: 3px; background: #0e0e0e; display: flex; align-items: center; justify-content: flex-end; padding-right: 5px; }

.taskbar { height: 9px; flex: none; overflow: hidden; display: flex; align-items: flex-start; gap: 12px; padding-left: 7px; background: linear-gradient(90deg, #34342a, #25271f 40%, #2a1d1a); }
.winlogo { width: 10px; height: 12px; margin-top: 5px; }
.find { width: 146px; height: 20px; margin: 0 2px 0 -5px; background: #f3f3f3; color: #555; display: flex; align-items: center; gap: 5px; padding-left: 8px; white-space: nowrap; }
.spark { width: 12px; height: 12px; margin-left: 27px; }
.task { width: 13px; height: 13px; margin: 4px 0 0; }
.active { background: #4d4f4a; width: 23px; height: 20px; padding-left: 5px; margin-left: -5px; }
.tray { margin-left: auto; display: flex; gap: 8px; padding-right: 10px; color: #eee; white-space: nowrap; }
.weather { padding-top: 4px; color: #d3c5c0; }

.queue { position: absolute; left: 159px; right: 76px; top: 5px; bottom: 12px; display: flex; flex-direction: column; background: #1a1a1a; border: 1px solid #2e2e2e; border-color: #303030 #0c0c0c #0c0c0c #303030; }
.qtitle { height: 17px; flex: none; display: flex; align-items: center; background: #141414; padding-left: 2px; }
.qlogo { width: 12px; height: 12px; opacity: .7; }
.qtab { align-self: flex-end; height: 15px; width: 106px; margin-left: 3px; padding: 0 7px 0 4px; display: flex; align-items: center; gap: 4px; background: #242424; color: #ddd; font-weight: 500; white-space: nowrap; border-radius: 2px 2px 0 0; }
.qtab .i4 { margin-left: auto; }
.qwin { margin-left: auto; display: flex; gap: 14px; padding-right: 8px; align-items: center; }
.qbar { height: 16px; flex: none; display: flex; align-items: center; gap: 4px; padding: 0 6px 0 4px; background: #232323; }
.qbar button { height: 12px; width: 41px; gap: 2px; background: #303030; color: #ddd; border-radius: 2px; font-weight: 500; }
.qbar .minus { width: 21px; }
.unsaved { margin-left: auto; display: flex; align-items: center; gap: 2px; }
.qbody { flex: 1; min-height: 0; display: flex; }
.jobs { flex: 1; border-right: 2px solid #131313; }
.jobs table { width: 100%; table-layout: fixed; border-collapse: collapse; }
.c0 { width: 38px; } .c1 { width: 184px; } .c2 { width: 184px; } .c3 { width: 333px; }
.jobs th { height: 13px; padding: 0; text-align: left; font-weight: 400; background: #2e2e2e; border-left: 1px solid #1c1c1c; border-bottom: 1px solid #1a1a1a; }
.jobs td { height: 11px; padding: 0; background: #40587a; color: #eee; white-space: nowrap; }
.jobs a { text-decoration: underline; }
.light { display: block; width: 6px; height: 6px; margin-left: 6px; border-radius: 50%; background: #d9a520; }
.job { display: flex; align-items: center; gap: 4px; font-weight: 500; }
.job svg { color: #8fa0b8; }
.set { display: flex; justify-content: space-between; padding-right: 3px; }
.set button { width: 14px; height: 9px; background: #0b0d12; }
.details { width: 260px; font-size: 6px; line-height: 8px; }
.details h2 { margin: 1px 0; height: 12px; font: 500 6px/12px Roboto, sans-serif; display: flex; align-items: center; gap: 2px; padding-left: 3px; background: #2f2f2f; color: #ccc; }
.drow { display: grid; grid-template-columns: 73px 1fr 14px; align-items: center; height: 14px; padding-left: 11px; background: #242424; border-bottom: 1px solid #1a1a1a; }
.drow.asset { height: 28px; }
.drow input { width: 127px; height: 9px; padding-left: 3px; background: #0e0e0e; border: 1px solid #303030; }
.drow .short { width: 64px; }
.drow > i { align-self: stretch; border-left: 1px solid #1a1a1a; display: flex; align-items: center; padding-left: 3px; }
.pick { display: flex; gap: 6px; }
.thumb { width: 23px; height: 24px; padding: 2px; background: #1b1b1b; }
.red { border-bottom: 1px solid #c23a55; } .org { border-bottom: 1px solid #b07b33; }
.sel { display: grid; align-items: center; }
.sel select, .sel svg { grid-area: 1 / 1; }
.sel select { width: 97px; height: 10px; padding-left: 3px; background: #0e0e0e; border: 1px solid #303030; }
.sel svg { justify-self: end; margin-right: 5px; }
.acts { display: flex; gap: 4px; padding: 3px 0 0 1px; }
.qfoot { height: 15px; flex: none; display: flex; align-items: center; justify-content: flex-end; gap: 11px; padding-right: 6px; background: #212121; }
.qfoot button { width: 55px; height: 11px; background: #303030; color: #707070; font-weight: 500; }

.dialog { position: absolute; left: 474px; top: 193px; width: 400px; height: 324px; display: flex; flex-direction: column; background: #fff; border: 1px solid #222; border-width: 1px 1px 1px 0; color: #555; font: 6px/8px "Open Sans", sans-serif; box-shadow: 0 0 3px #000; }
.dtitle { height: 14px; flex: none; display: flex; align-items: center; gap: 2px; padding: 0 5px 0 4px; color: #333; }
.dtitle .i6 { margin-left: auto; color: #777; }
.addr { height: 16px; flex: none; display: flex; align-items: center; gap: 6px; padding: 0 5px 0 6px; }
.dim { color: #ccc; }
.addr .up { margin-right: -3px; }
.crumbs { flex: 1; height: 12px; display: flex; align-items: center; gap: 3px; padding: 0 2px 0 1px; border: 1px solid #e2e2e2; white-space: nowrap; }
.crumbs .end { margin-left: auto; margin-right: 1px; }
.dsearch { width: 103px; height: 12px; display: flex; align-items: center; padding: 0 4px 0 1px; border: 1px solid #e2e2e2; }
.dsearch input { flex: 1; } .dsearch ::placeholder { color: #888; }
.dbar { height: 16px; flex: none; margin-top: 2px; display: flex; align-items: center; gap: 5px; padding: 0 8px 0 10px; background: #f4f5f6; color: #4d5d6d; }
.dbar button { gap: 1px; margin-right: 9px; }
.dbar .vw { margin-left: auto; }
.help { width: 8px; height: 8px; margin-left: 9px; border-radius: 50%; background: #1766b3; color: #fff; text-align: center; font-weight: 700; }
.dmain { flex: 1; min-height: 0; display: flex; }
.nav { width: 72px; display: flex; flex-direction: column; overflow: hidden; }
.nav li { flex: 1; min-height: 0; display: flex; align-items: center; gap: 3px; padding-left: 25px; white-space: nowrap; }
.nav .on { background: #d9d9d9; }
.nav .n1 { padding-left: 29px; } .nav .n2 { padding-left: 33px; }
.nav svg, .files td svg { width: 6px; height: 7px; }
.vs { width: 8px; background: #f0f0f0; display: flex; flex-direction: column; align-items: center; padding: 2px 0; }
.vs i { width: 8px; height: 32px; margin-top: 137px; background: #c8c8c8; }
.vs .foot { margin-top: auto; }
.files { flex: 1; min-width: 0; overflow: hidden; display: flex; flex-direction: column; justify-content: space-between; padding-left: 2px; }
.files table { width: 100%; table-layout: fixed; border-spacing: 0; color: #666; }
.f1 { width: 156px; } .f2 { width: 82px; } .f3 { width: 69px; }
.files th { height: 15px; padding: 0 0 0 3px; text-align: left; font-weight: 400; border-right: 1px solid #e6e6e6; color: #777; overflow: hidden; }
.files th:first-child { padding-left: 9px; }
.files thead::after { content: ""; display: block; height: 2px; }
.files td { height: 11px; padding: 0 0 0 3px; white-space: nowrap; line-height: 8px; }
.files td:first-child { padding-left: 10px; color: #444; }
.files td svg { display: inline-block; vertical-align: middle; margin-right: 3px; }
.files .on td { background: #cce6fb; }
.files .on td:first-child { background: linear-gradient(90deg, #fff 6px, #cce6fb 6px); }
.hs { height: 9px; flex: none; display: flex; align-items: center; justify-content: space-between; padding: 0 1px; background: #f0f0f0; }
.hs i { width: 265px; height: 8px; margin-right: auto; margin-left: 2px; background: #c9c9c9; }
.dfoot { height: 43px; flex: none; background: #efefef; padding: 8px 9px 0 0; }
.frow { display: flex; align-items: center; justify-content: flex-end; gap: 3px; }
.frow input { width: 307px; height: 13px; padding-left: 2px; background: #fff; border: 1px solid #aaa; color: #333; }
.btns { display: flex; justify-content: flex-end; gap: 6px; margin-top: 3px; }
.btns button { width: 44px; height: 13px; background: #e2e2e2; border: 1px solid #bbb; }
.btns .ok { width: 55px; background: #e0e7eb; border-color: #2f87b8; }
.cursor { position: absolute; left: 117px; top: 69px; width: 9px; height: 11px; }
```
